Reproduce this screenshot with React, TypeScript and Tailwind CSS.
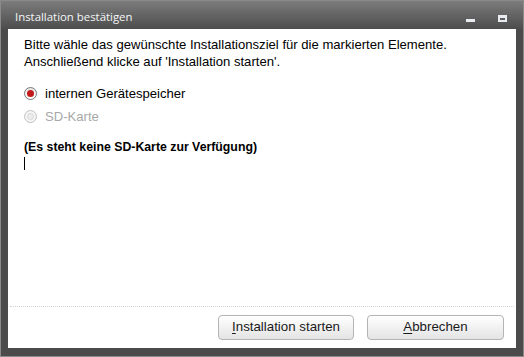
export default function App() {
  return (
    <div className="w-[524px] h-[357px] bg-[#4b4b4b] p-[1px] border border-[#8a8a8a]" style={{ fontFamily: "'Liberation Sans', Arial, sans-serif" }}>
      <div className="flex flex-col w-full h-full">
        {/* Title bar */}
        <div className="h-[28px] flex items-center pl-[14px] pr-[16px] bg-gradient-to-b from-[#7c7c7c] to-[#4d4d4d] -mx-[1px] -mt-[1px]">
          <span className="text-[11.4px] text-[#f4f6f8] pt-[4px]" style={{ fontFamily: "'Open Sans', 'Noto Sans', sans-serif" }}>
            Installation bestätigen
          </span>
          <div className="ml-auto flex items-center gap-[23px] pt-[6px]">
            <div className="w-[9px] h-[3px] bg-[#e8ecf0] mt-[4px]" />
            <div className="w-[9px] h-[7px] border-2 border-[#e8ecf0] border-t-[3px]" />
          </div>
        </div>

        {/* Body */}
        <div className="mx-[6px] mb-[7px] flex-1 bg-white flex flex-col">
          <div className="flex-1 pl-[16px] pt-[7px] text-[13.1px] text-black">
            <p className="leading-[17px]">
              Bitte wähle das gewünschte Installationsziel für die markierten Elemente.
              <br />
              Anschließend klicke auf 'Installation starten'.
            </p>

            <div className="mt-[15px] flex items-center gap-[8px] h-[17px]">
              <span className="w-[13px] h-[13px] rounded-full border border-[#7a7a7a] bg-gradient-to-b from-[#e6e6e6] to-white flex items-center justify-center">
                <span className="w-[7px] h-[7px] rounded-full bg-[#c21a1a]" />
              </span>
              <span>internen Gerätespeicher</span>
            </div>
            <div className="mt-[6px] flex items-center gap-[8px] h-[17px] text-[#a8a8a8]">
              <span className="w-[13px] h-[13px] rounded-full border border-[#c4c4c4] bg-[#f4f4f4] flex items-center justify-center">
                <span className="w-[7px] h-[7px] rounded-full border border-[#d8d8d8] bg-[#ececec]" />
              </span>
              <span>SD-Karte</span>
            </div>

            <p className="mt-[15px] text-[12.3px] font-bold leading-[14px]">
              (Es steht keine SD-Karte zur Verfügung)
            </p>
            <div className="mt-[3px] w-[1px] h-[13px] bg-black" />
          </div>

          <div className="mx-[2px] border-t border-dotted border-[#d4d4d4]" />

          <div className="h-[41px] flex items-center justify-end gap-[13px] pr-[12px] pb-[1px]">
            <button className="w-[136px] h-[25px] rounded-[4px] border border-[#b4b4b4] bg-gradient-to-b from-white to-[#e4e4e4] text-[13.3px] text-[#1a1a1a]">
              <span className="underline underline-offset-2">I</span>nstallation starten
            </button>
            <button className="w-[137px] h-[25px] rounded-[4px] border border-[#b4b4b4] bg-gradient-to-b from-white to-[#e4e4e4] text-[13.3px] text-[#1a1a1a]">
              <span className="underline underline-offset-2">A</span>bbrechen
            </button>
          </div>
        </div>
      </div>
    </div>
  )
}
